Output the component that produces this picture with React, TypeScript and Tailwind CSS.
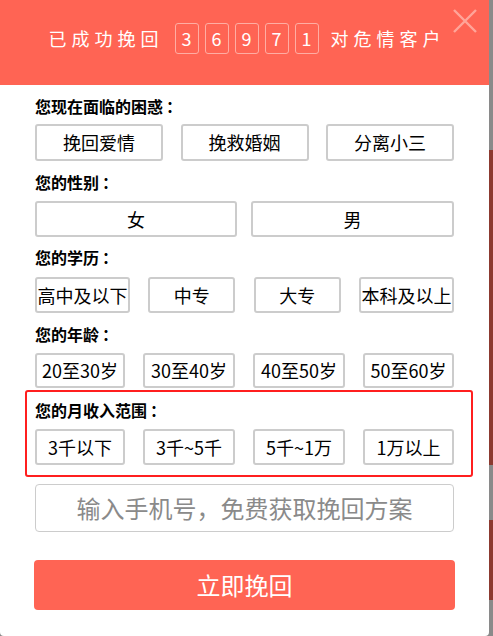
import React from "react";

const FONT = { fontFamily: '"Noto Sans CJK SC", "Noto Sans", sans-serif' };

const Opt = ({ label, w, h = 36 }: { label: string; w: number; h?: number }) => (
  <div
    className="flex items-center justify-center border-2 border-[#cccccc] rounded-[3px] bg-white text-[18px] text-black whitespace-nowrap overflow-visible"
    style={{ width: w, height: h }}
  >
    {label}
  </div>
);

const Label = ({ text }: { text: string }) => (
  <div className="h-[20px] leading-[20px] text-[16px] font-bold text-black">
    {text}
    <span className="ml-[3px]">：</span>
  </div>
);

const App = () => {
  const digits = ["3", "6", "9", "7", "1"];

  return (
    <div className="w-[493px] h-[636px] flex bg-[#888888] overflow-hidden" style={FONT}>
      <div className="w-[489px] h-[636px] bg-white rounded-b-[4px] flex flex-col">
        {/* header */}
        <div className="relative h-[85px] bg-[#ff6454] flex justify-center pt-[23px]">
          <div className="flex items-start h-[31px]">
            <span className="text-white text-[18px] tracking-[5px] leading-[31px]">已成功挽回</span>
            <div className="flex gap-[6px] ml-[11px] mr-[12px]">
              {digits.map((d, i) => (
                <div
                  key={i}
                  className="w-[24px] h-[31px] border border-[#ffada3] rounded-[3px] flex items-center justify-center text-white text-[18px]"
                >
                  {d}
                </div>
              ))}
            </div>
            <span className="text-white text-[18px] tracking-[5px] leading-[31px] mr-[-5px]">对危情客户</span>
          </div>
          <svg className="absolute left-[453px] top-[9px]" width="24" height="24" viewBox="0 0 24 24">
            <path d="M1 1 L23 23 M23 1 L1 23" stroke="#ffa599" strokeWidth="2.4" fill="none" />
          </svg>
        </div>

        {/* body */}
        <div className="px-[35px] pt-[11px] flex flex-col">
          <Label text="您现在面临的困惑" />
          <div className="mt-[8px] flex justify-between">
            <Opt label="挽回爱情" w={128} h={37} />
            <Opt label="挽救婚姻" w={128} h={37} />
            <Opt label="分离小三" w={128} h={37} />
          </div>

          <div className="mt-[11px]">
            <Label text="您的性别" />
          </div>
          <div className="mt-[9px] flex justify-between">
            <Opt label="女" w={202} />
            <Opt label="男" w={203} />
          </div>

          <div className="mt-[10px]">
            <Label text="您的学历" />
          </div>
          <div className="mt-[10px] flex justify-between">
            <Opt label="高中及以下" w={95} />
            <Opt label="中专" w={87} />
            <Opt label="大专" w={87} />
            <Opt label="本科及以上" w={95} />
          </div>

          <div className="mt-[11px]">
            <Label text="您的年龄" />
          </div>
          <div className="mt-[9px] flex justify-between">
            <Opt label="20至30岁" w={90} h={35} />
            <Opt label="30至40岁" w={92} h={35} />
            <Opt label="40至50岁" w={92} h={35} />
            <Opt label="50至60岁" w={91} h={35} />
          </div>

          <div className="mt-[2px] ml-[-10px] w-[448px] border-2 border-[#ff1f1f] rounded-[3px] pl-[8px] pt-[8px] pb-[10px]">
            <Label text="您的月收入范围" />
            <div className="mt-[9px] w-[419px] flex justify-between">
              <Opt label="3千以下" w={90} />
              <Opt label="3千~5千" w={92} />
              <Opt label="5千~1万" w={92} />
              <Opt label="1万以上" w={91} />
            </div>
          </div>

          <div className="mt-[7px] h-[48px] border border-[#cccccc] rounded-[4px] flex items-center justify-center text-[24px] text-[#8a8a8a]">
            输入手机号，免费获取挽回方案
          </div>

          <button className="mt-[28px] h-[50px] w-[421px] ml-[-1px] bg-[#ff6454] rounded-[4px] text-white text-[24px] flex items-center justify-center">
            立即挽回
          </button>
        </div>
      </div>
      <div className="w-[4px] h-[636px] flex flex-col">
        <div className="h-[150px] bg-[#8a8a8a]" />
        <div className="h-[315px] bg-[#8c3a30]" />
        <div className="h-[55px] bg-[#8a8a8a]" />
        <div className="h-[80px] bg-[#8c3a30]" />
        <div className="flex-1 bg-[#8a8a8a]" />
      </div>
    </div>
  );
};

export default App;
